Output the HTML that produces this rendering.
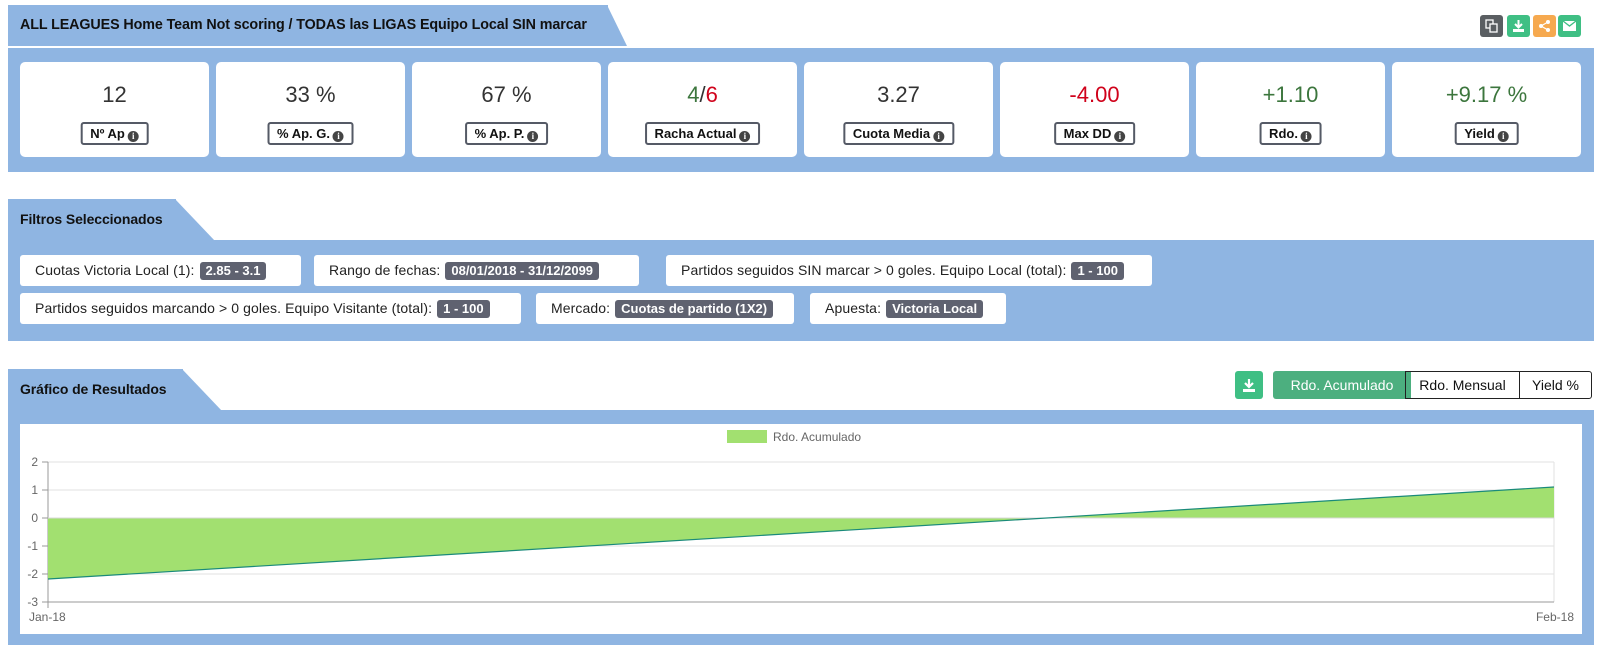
<!DOCTYPE html>
<html><head><meta charset="utf-8"><style>
*{box-sizing:border-box;margin:0;padding:0}
body{width:1601px;height:654px;background:#fff;font-family:"Liberation Sans",sans-serif;position:relative;overflow:hidden;color:#222}
.abs{position:absolute}
.blue{background:#8fb5e2}
.tab{position:absolute;height:41px;font-weight:bold;font-size:14px;color:#111;line-height:41px;padding-left:12px;letter-spacing:-0.1px}
.card{position:absolute;top:62px;width:189px;height:95px;background:#fff;border-radius:5px;text-align:center}
.val{position:absolute;top:20px;left:0;right:0;font-size:22px;color:#333}
.lbl{position:absolute;top:60px;left:50%;transform:translateX(-50%);border:2px solid #555a66;border-radius:3px;height:23px;line-height:19px;padding:0 8px;font-weight:bold;font-size:13px;white-space:nowrap;color:#111}
.i{display:inline-block;width:11px;height:11px;border-radius:50%;background:#444;color:#fff;font-size:9px;line-height:11px;text-align:center;font-family:"Liberation Serif",serif;font-weight:bold;vertical-align:-1px;margin-left:3px}
.g{color:#3c763d}.r{color:#d0021b}
.chip{position:absolute;height:31px;background:#fff;border-radius:3px;font-size:14px;line-height:31px;padding-left:15px;color:#222;white-space:nowrap;letter-spacing:0.1px}
.b{display:inline-block;background:#5f6270;color:#fff;font-weight:bold;font-size:13px;line-height:18px;padding:0 6px;border-radius:3px;margin-left:5px;letter-spacing:0}
.ib{position:absolute;top:15px;width:23px;height:22px;border-radius:3px}
</style></head><body>
<div class="tab blue" style="left:8px;top:5px;width:600px;font-size:14.3px">ALL LEAGUES Home Team Not scoring / TODAS las LIGAS Equipo Local SIN marcar</div>
<svg class="abs" style="left:607px;top:5px" width="20" height="41"><polygon points="0,0 0,41 20,41" fill="#8fb5e2"/></svg>
<div class="ib" style="left:1480px;background:#5a5e62"><svg width="23" height="22"><rect x="6" y="5" width="7" height="8" fill="none" stroke="#fff" stroke-width="1.3"/><rect x="10" y="9" width="7" height="8" fill="#5a5e62" stroke="#fff" stroke-width="1.3"/></svg></div>
<div class="ib" style="left:1507px;background:#3fbf84"><svg width="23" height="22"><path d="M11.5 5v7M8 9l3.5 3.5L15 9" stroke="#fff" stroke-width="2" fill="none"/><rect x="6" y="14" width="11" height="3" fill="#fff"/></svg></div>
<div class="ib" style="left:1533px;background:#f6a94f"><svg width="23" height="22"><circle cx="15" cy="7" r="2" fill="#fff"/><circle cx="8" cy="11" r="2" fill="#fff"/><circle cx="15" cy="15" r="2" fill="#fff"/><path d="M15 7L8 11L15 15" stroke="#fff" stroke-width="1.2" fill="none"/></svg></div>
<div class="ib" style="left:1558px;background:#3fbf84"><svg width="23" height="22"><rect x="5" y="6" width="13" height="10" fill="#fff"/><path d="M5 6l6.5 5L18 6" stroke="#3fbf84" stroke-width="1.3" fill="none"/></svg></div>

<div class="abs blue" style="left:8px;top:48px;width:1586px;height:124px"></div>
<div class="card" style="left:20px"><div class="val">12</div><div class="lbl">Nº Ap<span class="i">i</span></div></div>
<div class="card" style="left:216px"><div class="val">33 %</div><div class="lbl">% Ap. G.<span class="i">i</span></div></div>
<div class="card" style="left:412px"><div class="val">67 %</div><div class="lbl">% Ap. P.<span class="i">i</span></div></div>
<div class="card" style="left:608px"><div class="val"><span class="g">4</span>/<span class="r">6</span></div><div class="lbl">Racha Actual<span class="i">i</span></div></div>
<div class="card" style="left:804px"><div class="val">3.27</div><div class="lbl">Cuota Media<span class="i">i</span></div></div>
<div class="card" style="left:1000px"><div class="val r">-4.00</div><div class="lbl">Max DD<span class="i">i</span></div></div>
<div class="card" style="left:1196px"><div class="val g">+1.10</div><div class="lbl">Rdo.<span class="i">i</span></div></div>
<div class="card" style="left:1392px"><div class="val g">+9.17 %</div><div class="lbl">Yield<span class="i">i</span></div></div>

<div class="tab blue" style="left:8px;top:199px;width:168px">Filtros Seleccionados</div>
<svg class="abs" style="left:175px;top:199px" width="40" height="42"><polygon points="0,0 0,42 40,42" fill="#8fb5e2"/></svg>
<div class="abs blue" style="left:8px;top:240px;width:1586px;height:101px"></div>
<div class="chip" style="left:20px;top:255px;width:281px">Cuotas Victoria Local (1):<span class="b">2.85 - 3.1</span></div>
<div class="chip" style="left:314px;top:255px;width:325px">Rango de fechas:<span class="b">08/01/2018 - 31/12/2099</span></div>
<div class="chip" style="left:666px;top:255px;width:486px">Partidos seguidos SIN marcar &gt; 0 goles. Equipo Local (total):<span class="b">1 - 100</span></div>
<div class="chip" style="left:20px;top:293px;width:501px">Partidos seguidos marcando &gt; 0 goles. Equipo Visitante (total):<span class="b">1 - 100</span></div>
<div class="chip" style="left:536px;top:293px;width:258px">Mercado:<span class="b">Cuotas de partido (1X2)</span></div>
<div class="chip" style="left:810px;top:293px;width:196px">Apuesta:<span class="b">Victoria Local</span></div>

<div class="tab blue" style="left:8px;top:369px;width:175px">Gráfico de Resultados</div>
<svg class="abs" style="left:182px;top:369px" width="40" height="42"><polygon points="0,0 0,42 40,42" fill="#8fb5e2"/></svg>
<div class="abs" style="left:1235px;top:371px;width:28px;height:28px;background:#3fbf84;border-radius:3px"><svg width="28" height="28"><path d="M14 8v8M10 12l4 4 4-4" stroke="#fff" stroke-width="2.2" fill="none"/><rect x="8" y="18" width="12" height="3" fill="#fff"/></svg></div>
<div class="abs" style="left:1273px;top:371px;width:138px;height:28px;background:#4caf7f;color:#fff;font-size:14px;line-height:28px;text-align:center;border-radius:3px 0 0 3px">Rdo. Acumulado</div>
<div class="abs" style="left:1405px;top:371px;width:115px;height:28px;border:1px solid #222;font-size:14px;line-height:26px;text-align:center;color:#111">Rdo. Mensual</div>
<div class="abs" style="left:1519px;top:371px;width:73px;height:28px;border:1px solid #222;border-radius:0 3px 3px 0;font-size:14px;line-height:26px;text-align:center;color:#111">Yield %</div>

<div class="abs blue" style="left:8px;top:410px;width:1586px;height:235px"></div>
<div class="abs" style="left:20px;top:424px;width:1562px;height:210px;background:#fff"></div>
<svg class="abs" style="left:0;top:0" width="1601" height="654">
<rect x="727" y="430" width="40" height="13" fill="#a2e070"/>
<text x="773" y="441" font-size="12" fill="#666" font-family="Liberation Sans,sans-serif">Rdo. Acumulado</text>
<g stroke="#e2e2e2" stroke-width="1">
<line x1="48" y1="462" x2="1554" y2="462"/><line x1="48" y1="490" x2="1554" y2="490"/><line x1="48" y1="546" x2="1554" y2="546"/><line x1="48" y1="574" x2="1554" y2="574"/><line x1="1554" y1="462" x2="1554" y2="602"/>
</g>
<g stroke="#999"><line x1="48" y1="462" x2="48" y2="608"/><line x1="42" y1="602" x2="1554" y2="602"/><line x1="42" y1="462" x2="48" y2="462"/><line x1="42" y1="490" x2="48" y2="490"/><line x1="42" y1="518" x2="48" y2="518"/><line x1="42" y1="546" x2="48" y2="546"/><line x1="42" y1="574" x2="48" y2="574"/></g>
<polygon points="48,518 48,579 1554,487 1554,518" fill="#a2e070"/>
<line x1="48" y1="518" x2="1554" y2="518" stroke="#d8d8d8"/>
<line x1="48" y1="579" x2="1554" y2="487" stroke="#1a8a7a" stroke-width="1.2"/>
<g font-size="12" fill="#666" font-family="Liberation Sans,sans-serif" text-anchor="end">
<text x="38" y="466">2</text><text x="38" y="494">1</text><text x="38" y="522">0</text><text x="38" y="550">-1</text><text x="38" y="578">-2</text><text x="38" y="606">-3</text>
</g>
<text x="29" y="621" font-size="12" fill="#666" font-family="Liberation Sans,sans-serif">Jan-18</text>
<text x="1574" y="621" font-size="12" fill="#666" font-family="Liberation Sans,sans-serif" text-anchor="end">Feb-18</text>
</svg>
</body></html>
